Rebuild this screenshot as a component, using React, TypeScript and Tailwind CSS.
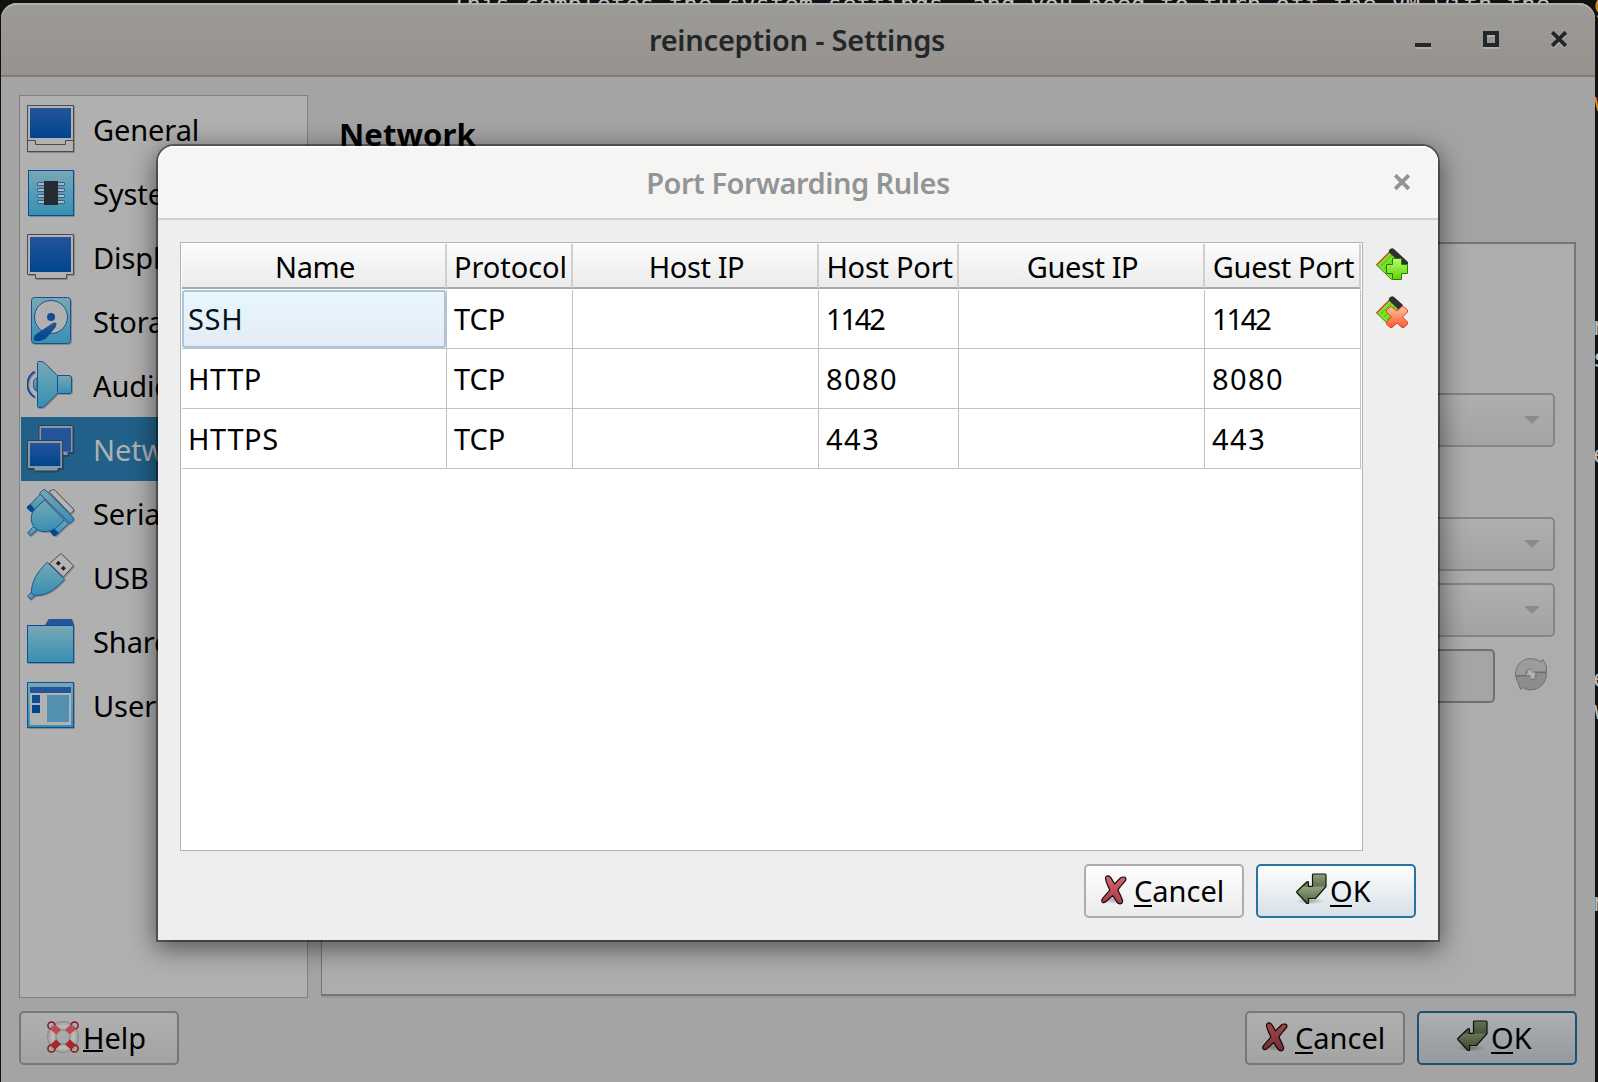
import React from "react";

const CY = "url(#cyan)";
const BL = "url(#blue)";
const EDGE = "#1d4f94";

function Defs() {
  return (
    <svg width="0" height="0" className="absolute">
      <defs>
        <linearGradient id="cyan" x1="0" y1="0" x2="0" y2="1">
          <stop offset="0" stopColor="#78a8b3" />
          <stop offset="1" stopColor="#3590b4" />
        </linearGradient>
        <linearGradient id="blue" x1="0" y1="0" x2="0" y2="1">
          <stop offset="0" stopColor="#24549a" />
          <stop offset="1" stopColor="#00458e" />
        </linearGradient>
        <linearGradient id="red" x1="0" y1="0" x2="0" y2="1">
          <stop offset="0" stopColor="#d9656b" />
          <stop offset="1" stopColor="#a73c46" />
        </linearGradient>
        <linearGradient id="olive" x1="0" y1="0" x2="0" y2="1">
          <stop offset="0" stopColor="#8f9f78" />
          <stop offset="0.42" stopColor="#5f7050" />
          <stop offset="0.43" stopColor="#93a37c" />
          <stop offset="1" stopColor="#4f6142" />
        </linearGradient>
        <linearGradient id="lime" x1="0" y1="0" x2="0" y2="1">
          <stop offset="0" stopColor="#b4ff70" />
          <stop offset="1" stopColor="#62cf00" />
        </linearGradient>
        <linearGradient id="coral" x1="0" y1="0" x2="0" y2="1">
          <stop offset="0" stopColor="#ffc4a6" />
          <stop offset="1" stopColor="#ff5630" />
        </linearGradient>
        <radialGradient id="soft">
          <stop offset="0" stopColor="#000" stopOpacity="0.3" />
          <stop offset="1" stopColor="#000" stopOpacity="0" />
        </radialGradient>
      </defs>
    </svg>
  );
}

const icons: Record<string, React.ReactNode> = {
  General: (
    <>
      <rect x="0.5" y="0.5" width="46" height="46" fill="#b1b1b1" stroke="#4c4c4c" />
      <rect x="3" y="3" width="41" height="30" fill={BL} />
      <path d="M0.5 35.5H8.5V39.5H38.5V35.5H46.5" fill="none" stroke="#4c4c4c" />
    </>
  ),
  System: (
    <>
      <rect x="1.5" y="1.5" width="45" height="45" fill={CY} stroke="#0a4a9b" />
      {[13.5, 19.5, 25.5, 31.5].map((y) => (
        <rect key={y} x="10.5" y={y} width="27" height="3" rx="0.5" fill="#b4b4b4" stroke="#2f6396" />
      ))}
      <rect x="17" y="12" width="14" height="24" fill="#262a31" />
    </>
  ),
  Display: (
    <>
      <path d="M0.5 1.5H46.5V41.5H39.5V45.5H8.5V41.5H0.5Z" fill="#b1b1b1" stroke="#4c4c4c" />
      <rect x="3" y="4" width="41" height="35" fill={BL} />
    </>
  ),
  Storage: (
    <>
      <rect x="4.5" y="0.5" width="39" height="46" rx="3" fill={CY} stroke={EDGE} />
      <circle cx="24" cy="20" r="16.5" fill="#b0b0b0" stroke={EDGE} />
      <circle cx="24" cy="20" r="4" fill="#104d96" />
      <path d="M29.3 26C29.6 28 29 29.8 28 31L18.7 41.7L13 43.9H7.8C6.5 42 6.5 40 8 38L11.5 35.5L25.5 26.3C27 25.3 28.7 25 29.3 26Z" fill={BL} />
    </>
  ),
  Audio: (
    <>
      <path d="M7.7 10.5C-2 17-2 30 7.7 36.3" fill="none" stroke="#0d4b99" strokeWidth="1.8" />
      <path d="M10 17C7 18 6.5 20 6.5 23.5S7 29 10 30Z" fill={CY} stroke={EDGE} />
      <path d="M30.5 14.5H42Q44.5 14.5 44.5 17V30Q44.5 32.5 42 32.5H30.5Z" fill={CY} stroke={EDGE} />
      <path d="M10.5 1.5Q10.5 .5 11.5 .5H14Q16 .5 17 1.5L30.5 14.5V32.5L17 45.5Q16 46.5 14 46.5H11.5Q10.5 46.5 10.5 45.5Z" fill={CY} stroke={EDGE} />
    </>
  ),
  Network: (
    <>
      <path d="M12 .5H46V27.5H41V30.5H36V27.5H12Z" fill="#8399a8" stroke="#30414d" />
      <rect x="14" y="3" width="30" height="23.7" fill="#24549a" />
      <path d="M.5 15.5H35.5V43.5H31V46H7V43.5H.5Z" fill="#8399a8" stroke="#30414d" />
      <rect x="3" y="18" width="30.3" height="23" fill={BL} />
    </>
  ),
  Serial: (
    <>
      <path d="M22 2.5L25.7.7Q27 .3 28 1.3L46.3 20Q47 21 46.3 22L43.5 25Z" fill="#b4b4b4" stroke="#4c4c4c" />
      <path d="M14 4.5L18.5 10L5.5 23L.7 18Z" fill={CY} stroke={EDGE} />
      <path d="M36 30L41.5 34.5L29 46.5L23.5 42Z" fill={CY} stroke={EDGE} />
      <path d="M3.5 15L7.5 20L4.5 23.5L0 19.5V17.5Z M26 38.5L31.5 43.5L28 47H26.5L23 43V41Z" fill="#034792" />
      <path d="M.5 44L6.5 37.5L10 41L3.5 46.7Z" fill={CY} stroke={EDGE} />
      <path d="M17.5 11L37 30.5C35 35 31.5 36.5 28.5 39C23 43.5 13 44 8 39C3 34 3 25 8 20Z" fill={CY} stroke={EDGE} />
      <path d="M16.5.5Q18 .5 19 1.5L46 28.5Q47 30 46 31.5L43 34.5L12.5 4.5Z" fill={CY} stroke={EDGE} />
    </>
  ),
  USB: (
    <>
      <path d="M34 .5L46.5 12.7L36.5 24L22.5 10.5Z" fill="#b4b4b4" stroke="#4c4c4c" />
      <path d="M31.3 7.8L34 10.3L31.3 12.8L28.8 10.3Z M36.3 12.8L39 15.3L36.3 17.8L33.8 15.3Z" fill="#222" />
      <path d="M.6 43L5 38.8L8.3 42.5L3.7 46.6Z" fill={CY} stroke={EDGE} />
      <path d="M20.3 9.3L37.5 26.3C28 37 18 43.5 7 42.2Q4.7 41.5 4.5 39.5C4 29 11 18 20.3 9.3Z" fill={CY} stroke={EDGE} />
    </>
  ),
  Shared: (
    <>
      <path d="M17.7 8.5L21.7 2H45L47 8.5Z" fill="#24549a" />
      <rect x="0.5" y="8.5" width="46" height="37" fill={CY} stroke="#0f4c98" />
    </>
  ),
  User: (
    <>
      <rect x="0.5" y="1.5" width="46" height="45" fill={CY} stroke="#0f4c98" />
      <rect x="3" y="6" width="41" height="38" fill="#b2b2b2" />
      <rect x="3" y="6" width="41" height="6" fill="#24549a" />
      <rect x="5" y="14" width="8" height="8" fill="#114c95" />
      <rect x="5" y="24" width="8" height="8" fill="#00458e" />
      <rect x="20" y="14" width="22" height="27" fill="#5390b0" />
    </>
  ),
};

const categories = [
  ["General", "General"],
  ["System", "System"],
  ["Display", "Display"],
  ["Storage", "Storage"],
  ["Audio", "Audio"],
  ["Network", "Network"],
  ["Serial", "Serial Ports"],
  ["USB", "USB"],
  ["Shared", "Shared Folders"],
  ["User", "User Interface"],
];

function CancelIcon() {
  return (
    <svg width="26" height="32" viewBox="0 0 26 32">
      <ellipse cx="13" cy="27" rx="12" ry="4" fill="url(#soft)" />
      <path
        d="M4.6 4.5C5.4 2.2 8.6 2.4 9.8 4.6L13.6 10.8L19.4 5C21.8 3.2 25.6 4 24.8 6.8C24.2 8.6 18.4 14.2 17 17C18 20 21.8 25.6 21.6 28.6C21 31.4 17.6 31.6 16 29.2L11.8 22.6L4.8 28.8C2.6 30.6 .2 29.4 .9 26.8C1.8 24.4 6.8 20 8.8 17C7.4 13.8 4 7.5 4.6 4.5Z"
        fill="url(#red)"
        stroke="#15090a"
        strokeWidth="1.2"
      />
    </svg>
  );
}

function OkIcon() {
  return (
    <svg width="32" height="32" viewBox="0 0 32 32">
      <ellipse cx="14" cy="28" rx="14" ry="3.5" fill="url(#soft)" />
      <path
        d="M17.5 1H29Q30 1 30 2V13.5L19.5 25.5H12.5V30.5H11L.8 19.5V18.5L11 8.8H12.5V13.3H16.5V2Q16.5 1 17.5 1Z"
        fill="url(#olive)"
        stroke="#10160c"
        strokeWidth="1.2"
        strokeLinejoin="round"
      />
    </svg>
  );
}

function HelpIcon() {
  return (
    <svg width="32" height="32" viewBox="0 0 32 32">
      <circle cx="16" cy="16" r="11.2" fill="none" stroke="#8a8a8a" strokeWidth="9.4" />
      <circle cx="16" cy="16" r="11.2" fill="none" stroke="#a9a9a9" strokeWidth="7" />
      <circle cx="16" cy="16" r="10.4" fill="none" stroke="#b8b8b8" strokeWidth="4" />
      <g fill="none" stroke="#851116" strokeWidth="1.5">
        <circle cx="4.5" cy="4.5" r="3.6" />
        <circle cx="27.5" cy="4.5" r="3.6" />
        <circle cx="4.5" cy="27.5" r="3.6" />
        <circle cx="27.5" cy="27.5" r="3.6" />
      </g>
      <path d="M3 8L8 3.5L14 8.5L9 13.5Z M29 8L24 3.5L18 8.5L23 13.5Z" fill="#bd4a4c" />
      <path d="M3 24L8 28.5L14 23.5L9 18.5Z M29 24L24 28.5L18 23.5L23 18.5Z" fill="#a9262a" />
    </svg>
  );
}

function Mnemonic({ text, barClass }: { text: string; barClass: string }) {
  return (
    <span className="relative">
      {text}
      <span className={`absolute left-0 top-[32px] h-[2px] bg-black ${barClass}`} />
    </span>
  );
}

const btn = "flex h-[54px] w-[160px] rounded-[5px] border-2 pb-[2px] text-[29px] leading-[36px]";

function Buttons({ dim }: { dim: boolean }) {
  return (
    <div className="flex gap-[12px]">
      <button
        className={`${btn} pl-[15px] pt-[7px] ${
          dim ? "border-[#777777] bg-linear-to-b from-[#b0b0b0] to-[#a3a3a3]" : "border-[#adadad] bg-linear-to-b from-[#fefefe] to-[#ebebeb]"
        }`}
      >
        <span className={dim ? "mr-[7px] brightness-[.72]" : "mr-[7px]"}>
          <CancelIcon />
        </span>
        <Mnemonic text="Cancel" barClass="w-[18px]" />
      </button>
      <button
        className={`${btn} pl-[38px] pt-[7px] ${
          dim ? "border-[#1b5176] bg-linear-to-b from-[#adafb1] to-[#949a9f]" : "border-[#2873a2] bg-linear-to-b from-[#fdfefe] to-[#d7e0e7]"
        }`}
      >
        <span className={dim ? "mr-[2px] brightness-[.72]" : "mr-[2px]"}>
          <OkIcon />
        </span>
        <Mnemonic text="OK" barClass="w-[22px]" />
      </button>
    </div>
  );
}

function CloseGlyph({ color, shadow }: { color: string; shadow?: boolean }) {
  return (
    <svg width="16" height="18" viewBox="0 0 16 18">
      {shadow && <path d="M2 4L14 16M14 4L2 16" stroke="#b5b3b0" strokeWidth="3.2" />}
      <path d="M1.2 1.2L14.8 14.8M14.8 1.2L1.2 14.8" stroke={color} strokeWidth="3.8" />
    </svg>
  );
}

function RuleIcon({ remove }: { remove?: boolean }) {
  return (
    <svg width="32" height="32" viewBox="0 0 32 32">
      <path d="M14 4L28 17L15.5 31.5L.5 17Z" fill="#7be02a" stroke="#3e8f10" />
      <path d="M5 18L16 7M8 21L19 10M11 24L22 13M14 27L25 16" stroke="#55b512" />
      <path d="M.5 17L14 3.5" stroke="#e0452a" strokeWidth="1.3" />
      <path d={remove ? "M13 2Q16-1 18 1L27 9L23 14L13 4.5Z" : "M13 2Q16-1 18 1L32 14V16H26L13 4.5Z"} fill="#303030" />
      {remove ? (
        <path
          d="M15 10.5L21 15L26 10.5Q28 10 31.5 14V16L26.5 21L31.5 26V28L28 31.5H26L21 27L16 31.5H14L10.5 28V26L15.5 21L10.5 16V14Z"
          fill="url(#coral)"
          stroke="#d84320"
        />
      ) : (
        <path d="M16.5 10.5H25.5V16.5H31.5V25.5H25.5V31.5H16.5V25.5H10.5V16.5H16.5Z" fill="url(#lime)" stroke="#2b7a07" />
      )}
    </svg>
  );
}

function Combo() {
  return (
    <div className="flex h-[54px] items-center justify-end rounded-[5px] border-2 border-[#858585] bg-linear-to-b from-[#afafaf] to-[#a3a3a3] pr-[13px]">
      <svg width="16" height="8" viewBox="0 0 16 8">
        <path d="M0 0H16L8 8Z" fill="#8a8a8a" />
      </svg>
    </div>
  );
}

function RefreshIcon() {
  return (
    <svg width="32" height="34" viewBox="0 0 32 34">
      <path
        d="M.6 17.5V15C2 1 17-3 25.5 4L27.5 1.2L31.4 8V14H17.5L20.5 18Q18 20 15.5 17.5L14.5 13L16 11C11 11 10 14 11 17.5Z"
        fill="#9c9c9c"
        stroke="#6d6d6d"
        strokeLinejoin="round"
      />
      <path
        d="M31.4 14.5V17C30 31 15 35 8 29.5L5.5 31.5L.6 18H14.5L11.5 14.5Q14 12 15.5 15.5L17.5 19L16 22C21 21.5 22 18 20.5 14.5Z"
        fill="#8d8d8d"
        stroke="#6d6d6d"
        strokeLinejoin="round"
      />
      <path d="M16.5 11.5C12.5 12 12 15 12.5 16.5L16 18L15.5 21C19.5 20.5 20.5 18 19.8 15L16 14Z" fill="#b2b2b2" />
    </svg>
  );
}

const columns: [string, string][] = [
  ["Name", "tracking-[-0.5px]"],
  ["Protocol", "tracking-[-0.05px]"],
  ["Host IP", "tracking-[-0.4px]"],
  ["Host Port", "tracking-[-0.25px]"],
  ["Guest IP", "tracking-[-0.4px]"],
  ["Guest Port", "tracking-[-0.35px]"],
];

const tracking: Record<string, string> = {
  SSH: "tracking-[0.7px]",
  HTTP: "tracking-[0.5px]",
  HTTPS: "tracking-[0.6px]",
  "1142": "tracking-[-2.2px]",
  "8080": "tracking-[1.4px]",
  "443": "tracking-[1.5px]",
};

const rules = [
  ["SSH", "TCP", "", "1142", "", "1142"],
  ["HTTP", "TCP", "", "8080", "", "8080"],
  ["HTTPS", "TCP", "", "443", "", "443"],
];

const grid = "grid grid-cols-[265px_126px_246px_140px_246px_156px]";

function PortForwardingDialog() {
  return (
    <section className="absolute left-[158px] top-[146px] flex h-[794px] w-[1280px] flex-col rounded-t-[16px] bg-[#eeeeee] shadow-[0_0_0_2px_rgba(0,0,0,0.4),0_6px_26px_3px_rgba(0,0,0,0.5)]">
      <header className="relative flex h-[74px] items-center justify-center rounded-t-[16px] border-b-2 border-[#d5d0cc] bg-[#f6f5f4] shadow-[inset_0_2px_0_#ffffff]">
        <h2 className="mt-[2px] text-[29px] font-semibold leading-[40px] tracking-[-0.5px] text-[#929595]">Port Forwarding Rules</h2>
        <span className="absolute right-[28px] top-[28px]">
          <CloseGlyph color="#929595" />
        </span>
      </header>
      <div className="flex gap-[13px] pl-[22px] pt-[22px]">
        <div className="h-[609px] w-[1183px] border border-[#b3b3b3] bg-white pl-px pt-px">
          <div className={`${grid} h-[46px]`}>
            {columns.map(([label, spacing]) => (
              <div
                key={label}
                className="flex h-[45px] items-center justify-center whitespace-nowrap border-b-2 border-r-2 border-b-[#a9a9a9] border-r-[#cfcfcf] bg-linear-to-b from-[#fcfcfc] to-[#ebebeb] pl-[3px] pt-[3px] text-[29px] leading-[36px]"
              >
                <span className={spacing}>{label}</span>
              </div>
            ))}
          </div>
          {rules.map((rule, r) => (
            <div key={rule[0]} className={`${grid} ${r === 0 ? "h-[59px]" : "h-[60px]"}`}>
              {rule.map((value, c) => (
                <div key={c} className="flex border-b border-r border-[#c3c3c3]">
                  <div
                    className={
                      r === 0 && c === 0
                        ? "flex flex-1 items-center rounded-[3px] border-2 border-[#a9c5d9] bg-linear-to-b from-[#e8f6ff] to-[#e4ecf4] pl-[4px] text-[29px] leading-[36px] text-[#06131c]"
                        : `flex flex-1 items-center text-[29px] leading-[36px] ${c === 0 ? "pl-[6px]" : "pl-[7px]"}`
                    }
                  >
                    <span className={tracking[value]}>{value}</span>
                  </div>
                </div>
              ))}
            </div>
          ))}
        </div>
        <div className="flex flex-col gap-[16px] pt-[6px]">
          <RuleIcon />
          <RuleIcon remove />
        </div>
      </div>
      <footer className="flex justify-end pr-[22px] pt-[13px]">
        <Buttons dim={false} />
      </footer>
    </section>
  );
}

function Backdrop() {
  return (
    <div className="absolute inset-0 overflow-hidden bg-[#111111] font-['DejaVu_Sans_Mono',monospace] text-[24px] leading-[28px] text-[#c0c0c0]">
      <div className="absolute left-[452px] top-[-9px] whitespace-pre">
        This completes the system settings, and you need to turn off the VM with the
      </div>
      <span className="absolute left-[1594px] top-[-9px] text-[#e08a1e]">g</span>
      <span className="absolute left-[1594px] top-[89px] text-[#e08a1e]">w</span>
      <span className="absolute left-[1593px] top-[313px]">n</span>
      <span className="absolute left-[1593px] top-[345px]">s</span>
      <span className="absolute left-[1593px] top-[441px]">e</span>
      <span className="absolute left-[1593px] top-[665px]">e</span>
      <span className="absolute left-[1594px] top-[697px]">w</span>
      <span className="absolute left-[1593px] top-[889px]">n</span>
    </div>
  );
}

export default function App() {
  return (
    <main className="relative h-[1082px] w-[1598px] overflow-hidden font-['Noto_Sans',sans-serif] text-black">
      <Defs />
      <Backdrop />
      <div className="relative ml-px flex h-full w-[1594px] flex-col pt-[3px]">
        <div className="flex h-[1079px] w-[1594px] flex-col rounded-t-[16px] bg-[#a4a4a4]">
          <header className="relative flex h-[74px] items-center justify-center rounded-t-[16px] border-b-2 border-[#827b75] bg-linear-to-b from-[#9c9b98] to-[#97928e] shadow-[inset_0_2px_0_#b0b0ae]">
            <h1 className="mr-[2px] mt-[2px] text-[29px] font-semibold leading-[40px] tracking-[-0.25px] text-[#222729]">reinception - Settings</h1>
            <div className="absolute right-[28px] top-[28px] flex gap-[52px]">
              <svg width="16" height="18" viewBox="0 0 16 18">
                <path d="M0 14H16V18H0Z" fill="#b0aeab" />
                <path d="M0 12H16V16H0Z" fill="#222729" />
              </svg>
              <svg width="16" height="18" viewBox="0 0 16 18">
                <path d="M0 16H16V18H0Z M4 4H12V6H4Z" fill="#b0aeab" />
                <path d="M2 2H14V14H2Z" fill="none" stroke="#222729" strokeWidth="4" />
              </svg>
              <CloseGlyph color="#222729" shadow />
            </div>
          </header>
          <div className="flex h-[903px] gap-[13px] pl-[18px] pt-[18px] pr-[19px]">
            <nav className="h-[903px] w-[289px] shrink-0 border border-[#808080] bg-[#b0b0b0] pl-px pt-px">
              {categories.map(([key, label]) => (
                <div
                  key={key}
                  className={`flex h-[64px] items-center overflow-hidden whitespace-nowrap pl-[6px] text-[29px] leading-[36px] ${
                    key === "Network" ? "bg-[#216189] text-[#b0b0b0]" : ""
                  }`}
                >
                  <svg className="shrink-0 drop-shadow-[1px_1px_0_rgba(0,0,0,0.22)]" width="48" height="48" viewBox="0 0 48 48">
                    {icons[key]}
                  </svg>
                  <span className="ml-[18px] mt-[2px] tracking-[-0.1px]">{label}</span>
                </div>
              ))}
            </nav>
            <div className="flex flex-1 flex-col">
              <h2 className="ml-[18px] mt-[18px] text-[31px] font-bold leading-[42px] tracking-[0.1px]">Network</h2>
              <div className="mt-[87px] flex h-[754px] shrink-0 flex-col border-2 border-l border-[#757575] bg-[#adadad] pl-[20px] pr-[19px] pt-[149px] shadow-[0_2px_0_#9b9b9b]">
                <Combo />
                <div className="mt-[70px]">
                  <Combo />
                </div>
                <div className="mt-[12px]">
                  <Combo />
                </div>
                <div className="mt-[12px] flex items-center gap-[20px]">
                  <div className="h-[54px] flex-1 rounded-[5px] border-2 border-[#707070] bg-[#a5a5a5]" />
                  <span className="mb-[2px] mr-[8px]">
                    <RefreshIcon />
                  </span>
                </div>
              </div>
            </div>
          </div>
          <footer className="mt-[31px] flex items-center justify-between pl-[18px] pr-[18px]">
            <button className={`${btn} border-[#777777] bg-linear-to-b from-[#b0b0b0] to-[#a3a3a3] pl-[26px] pt-[7px]`}>
              <span className="mt-px">
                <HelpIcon />
              </span>
              <span className="ml-[4px]">
                <Mnemonic text="Help" barClass="w-[20px]" />
              </span>
            </button>
            <Buttons dim />
          </footer>
        </div>
      </div>
      <PortForwardingDialog />
    </main>
  );
}
